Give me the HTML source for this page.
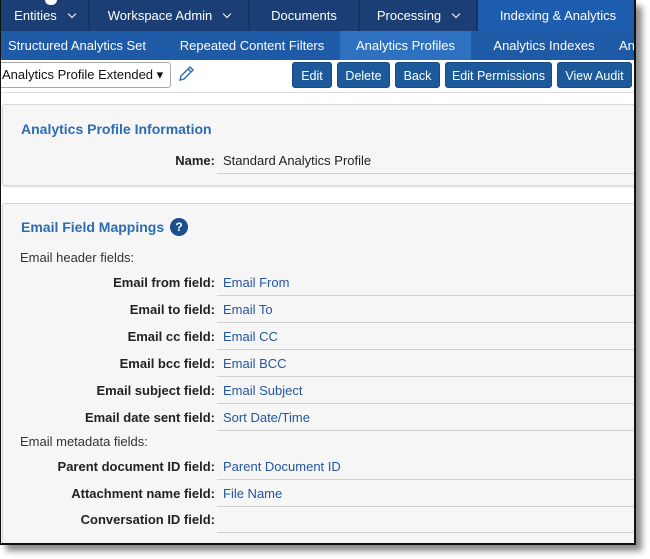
<!DOCTYPE html>
<html><head><style>
*{margin:0;padding:0;box-sizing:border-box}
body{width:650px;height:559px;background:#fff;font-family:"Liberation Sans",Arial,sans-serif;position:relative;overflow:hidden}
#frame{position:absolute;left:0;top:0;width:636px;height:545px;border-right:2px solid #111;border-bottom:2px solid #111;border-left:1px solid #111;background:#fff;overflow:hidden;box-shadow:6px 6px 6px rgba(0,0,0,.45)}
.abs{position:absolute}
.nav1{left:0;top:0;width:640px;height:31px;background:#1b3f74}
.t1{position:absolute;top:0;height:31px;line-height:31px;color:#fff;font-size:13px;text-align:center;border-right:2px solid #153463}
.chev{display:inline-block;width:6px;height:6px;border-right:1.5px solid #fff;border-bottom:1.5px solid #fff;transform:rotate(45deg);margin-left:12px;position:relative;top:-3px}
.nav2{left:0;top:31px;width:640px;height:29px;background:#1f5aa6}
.t2{position:absolute;top:0;height:29px;line-height:29px;color:#fff;font-size:13px;text-align:center}
.btn{position:absolute;top:62px;height:26px;line-height:26px;background:#1c5a9c;color:#fff;font-size:12.5px;text-align:center;border-radius:3px;border:1px solid #164b84}
.panel{position:absolute;left:1px;width:640px;background:#f6f6f6;border:1px solid #d8d8d8;border-radius:3px;box-shadow:0 1px 2px rgba(0,0,0,.15)}
.h{position:absolute;left:20px;color:#2c6cb1;font-size:14px;font-weight:bold}
.lab{position:absolute;right:419px;font-size:13px;font-weight:bold;color:#222;text-align:right;white-space:nowrap}
.val{position:absolute;left:222px;font-size:13px;color:#2456a0}
.ul{position:absolute;left:216px;width:430px;height:1px;background:#d0d0d0}
.sec{position:absolute;left:19px;font-size:13px;color:#333}
</style></head><body>
<div id="frame">
<div class="abs nav1">
 <div class="t1" style="left:0;width:89px">Entities<span class="chev"></span></div>
 <div class="t1" style="left:89px;width:160px">Workspace Admin<span class="chev"></span></div>
 <div class="t1" style="left:249px;width:110px">Documents</div>
 <div class="t1" style="left:359px;width:118px">Processing<span class="chev"></span></div>
 <div class="t1" style="left:477px;width:160px;background:#1e5cad;border:none">Indexing &amp; Analytics</div>
 <div class="abs" style="left:44px;top:0;width:12px;height:5px;background:#fff;border-radius:0 0 6px 6px"></div>
</div>
<div class="abs nav2">
 <div class="t2" style="left:0;width:152px">Structured Analytics Set</div>
 <div class="t2" style="left:166px;width:170px">Repeated Content Filters</div>
 <div class="t2" style="left:339px;width:131px;background:#2d71c0">Analytics Profiles</div>
 <div class="t2" style="left:478px;width:130px">Analytics Indexes</div>
 <div class="t2" style="left:618px;width:30px;text-align:left">An</div>
</div>
<div class="abs" style="left:-2px;top:62px;width:172px;height:26px;border:1px solid #aaa;border-radius:3px;background:#fff;font-size:13px;line-height:24px;padding-left:2px;color:#111">Analytics Profile Extended ▾</div>
<svg class="abs" style="left:175px;top:64px" width="20" height="20" viewBox="0 0 20 20"><path d="M4 16 L5 12 L14 3 L17 6 L8 15 Z M12 5 L15 8" fill="none" stroke="#2c6cb1" stroke-width="1.4"/></svg>
<div class="btn" style="left:291px;width:40px">Edit</div>
<div class="btn" style="left:336px;width:53px">Delete</div>
<div class="btn" style="left:394px;width:45px">Back</div>
<div class="btn" style="left:444px;width:107px">Edit Permissions</div>
<div class="btn" style="left:556px;width:75px">View Audit</div>
<div class="abs" style="left:0;top:92px;width:640px;height:1px;background:#ddd"></div>

<div class="panel" style="top:104px;height:82px"></div>
<div class="h" style="top:121px">Analytics Profile Information</div>
<div class="lab" style="top:153px">Name:</div>
<div class="val" style="top:153px;color:#222">Standard Analytics Profile</div>
<div class="ul" style="top:173px"></div>

<div class="panel" style="top:203px;height:360px"></div>
<div class="h" style="top:219px">Email Field Mappings</div>
<div class="sec" style="top:250px">Email header fields:</div>
<div class="lab" style="top:275px">Email from field:</div><div class="val" style="top:275px">Email From</div><div class="ul" style="top:295px"></div>
<div class="lab" style="top:302px">Email to field:</div><div class="val" style="top:302px">Email To</div><div class="ul" style="top:322px"></div>
<div class="lab" style="top:329px">Email cc field:</div><div class="val" style="top:329px">Email CC</div><div class="ul" style="top:349px"></div>
<div class="lab" style="top:356px">Email bcc field:</div><div class="val" style="top:356px">Email BCC</div><div class="ul" style="top:376px"></div>
<div class="lab" style="top:383px">Email subject field:</div><div class="val" style="top:383px">Email Subject</div><div class="ul" style="top:403px"></div>
<div class="lab" style="top:410px">Email date sent field:</div><div class="val" style="top:410px">Sort Date/Time</div><div class="ul" style="top:430px"></div>
<div class="sec" style="top:434px">Email metadata fields:</div>
<div class="lab" style="top:459px">Parent document ID field:</div><div class="val" style="top:459px">Parent Document ID</div><div class="ul" style="top:479px"></div>
<div class="lab" style="top:486px">Attachment name field:</div><div class="val" style="top:486px">File Name</div><div class="ul" style="top:506px"></div>
<div class="lab" style="top:512px">Conversation ID field:</div><div class="ul" style="top:532px"></div>
</div>
<div class="abs" style="left:170px;top:218px;width:18px;height:18px;border-radius:50%;background:#1c4f8e;color:#fff;font-size:12px;font-weight:bold;text-align:center;line-height:18px">?</div>
</body></html>
